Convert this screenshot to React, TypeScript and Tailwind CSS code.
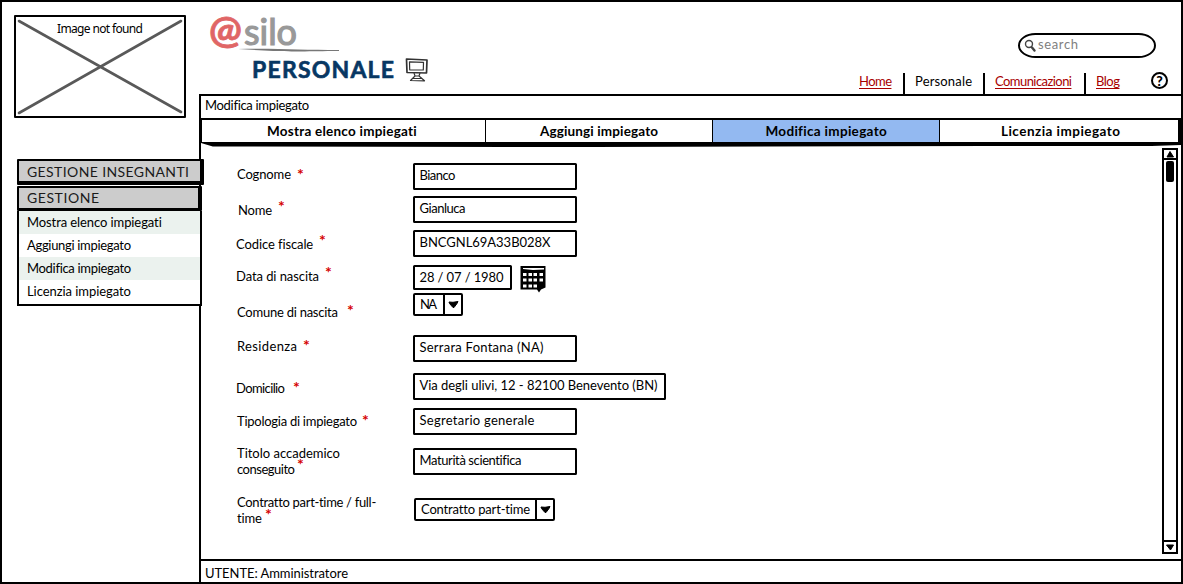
import { useLayoutEffect, useRef, useState, type ReactNode } from "react";

/* Text tracked so that its glyphs span a given width. */
function Fit({ w, className = "", children }: { w: number; className?: string; children: string }) {
  const ref = useRef<HTMLSpanElement>(null);
  const [spacing, setSpacing] = useState<number | null>(null);
  useLayoutEffect(() => {
    if (ref.current && spacing === null) {
      const natural = ref.current.getBoundingClientRect().width;
      setSpacing((w - natural) / Math.max(1, children.length - 1));
    }
  }, [w, children, spacing]);
  return (
    <span
      ref={ref}
      className={`inline-block shrink-0 whitespace-pre ${className}`}
      style={spacing === null ? undefined : { letterSpacing: spacing, width: w }}
    >
      {children}
    </span>
  );
}

function Placeholder() {
  return (
    <div className="relative ml-[12px] mt-[13px] h-[103px] w-[172px] rounded-[1px] border-[2.5px] border-black">
      <svg className="absolute inset-0 h-full w-full" viewBox="0 0 168 99" preserveAspectRatio="none">
        <path d="M3 4 L165 95 M165 4 L3 96" stroke="#595959" strokeWidth="2.6" strokeLinecap="round" />
      </svg>
      <div className="relative flex justify-center pt-[4px] font-['Noto_Sans',sans-serif] text-[12px] leading-[16px]">
        <Fit w={86}>Image not found</Fit>
      </div>
    </div>
  );
}

const menu = [
  { text: "Mostra elenco impiegati", w: 135 },
  { text: "Aggiungi impiegato", w: 104 },
  { text: "Modifica impiegato", w: 104 },
  { text: "Licenzia impiegato", w: 104 },
];

function Sidebar() {
  return (
    <aside className="relative z-10 flex w-[197px] shrink-0 flex-col">
      <Placeholder />
      <div className="ml-[15px] mt-[41px] h-[26px] w-[187px] rounded-[1px] border-t-[2px] border-l-[2px] border-b-[4px] border-r-[4px] border-black bg-[#cccccc] pl-[8px] text-[14px] leading-[21px] text-[#1a1a1a]">
        <Fit w={162}>GESTIONE INSEGNANTI</Fit>
      </div>
      <div className="ml-[15px] mt-px h-[25px] w-[185px] rounded-[1px] border-[2px] border-b-[3px] border-r-[4px] border-black bg-[#cccccc] pl-[8px] text-[14px] leading-[19px] text-[#1a1a1a]">
        <Fit w={72}>GESTIONE</Fit>
      </div>
      <ul className="ml-[15px] w-[185px] border-2 border-t-0 border-black bg-white">
        {menu.map((m) => (
          <li key={m.text} className="h-[23px] pl-[8px] leading-[23px] odd:bg-[#ebf2ee] last:h-[24px]">
            <Fit w={m.w}>{m.text}</Fit>
          </li>
        ))}
      </ul>
    </aside>
  );
}

function Monitor() {
  return (
    <svg className="ml-[11px] mt-px" width="24" height="25" viewBox="0 0 24 25" fill="none" stroke="#333" strokeLinejoin="round">
      <path d="M1.5 1 L22 2 L21.5 15 L2 14.5 Z" strokeWidth="1.7" />
      <path d="M4.5 3.8 L18.5 4.3 L18.3 12 L4.7 11.8 Z" strokeWidth="1.2" />
      <path d="M9 15 L10 18 L14 18 L15 15 M10 18 L5.5 22.5 L19.5 22.8 L14 18 M8 20.5 L16 20.5" strokeWidth="1.2" />
    </svg>
  );
}

function Header() {
  return (
    <header className="flex h-[92px] justify-between">
      <div className="flex flex-col pl-[10px]">
        <div className="flex h-[48px] items-start pt-[5px] leading-[48px]">
          <Fit w={35} className="text-[39px] font-bold leading-[42px] text-[#e06666] [-webkit-text-stroke:0.8px_#e06666]">@</Fit>
          <Fit w={53} className="text-[36px] leading-[48px] text-[#999999] [-webkit-text-stroke:1.2px_#999999]">silo</Fit>
        </div>
        <svg className="-mt-[2px] ml-[29px]" width="102" height="4" viewBox="0 0 102 4">
          <path d="M0 1 C35 0 65 2 101 2 L101 3 C75 3 70 4 35 3 Z" fill="#777" />
        </svg>
        <div className="flex pl-[43px] pt-[5px]">
          <Fit w={142} className="text-[23px] font-bold leading-[24px] text-[#073763] [-webkit-text-stroke:0.6px_#073763]">PERSONALE</Fit>
          <Monitor />
        </div>
      </div>
      <div className="flex flex-col items-end">
        <div className="mr-[25px] mt-[31px] flex h-[25px] w-[138px] items-center rounded-[18px/13px] border-2 border-black pl-[4px] text-[#808080]">
          <svg width="14" height="14" viewBox="0 0 14 14" fill="none" stroke="#444" strokeLinecap="round">
            <circle cx="5" cy="5" r="3.5" strokeWidth="1.4" />
            <path d="M8 8.5 L10.5 11.5" strokeWidth="2.4" />
          </svg>
          <Fit w={40} className="-mt-[2px]">search</Fit>
        </div>
        <nav className="mr-[13px] mt-[15px] flex h-[21px] leading-[16px] [&>a]:text-[#a80000] [&>a>span]:underline [&>a>span]:underline-offset-2">
          <a className="pr-[11px]"><Fit w={33}>Home</Fit></a>
          <span className="border-l-2 border-black pl-[10px] pr-[11px]"><Fit w={57}>Personale</Fit></span>
          <i className="w-[2px] bg-black" />
          <a className="pl-[10px] pr-[12px]"><Fit w={77}>Comunicazioni</Fit></a>
          <i className="w-[2px] bg-black" />
          <a className="pl-[10px] pr-[31px]"><Fit w={24}>Blog</Fit></a>
          <span className="-mt-px flex h-[17px] w-[17px] items-center justify-center rounded-full border-2 border-black text-[14px] font-black leading-[13px]">?</span>
        </nav>
      </div>
    </header>
  );
}

function Tabs() {
  return (
    <div className="flex h-[27px] border-b-[5px] border-black font-bold leading-[22px] text-[13.5px] [clip-path:polygon(0_0,100%_0,100%_25px,97%_26px,80%_26px,40%_27px,1.2%_26.5px,0_23px)]">
      <div className="flex w-[285px] justify-center border-l-[1.5px] border-r-[1.5px] border-black pr-[3px]"><Fit w={150}>Mostra elenco impiegati</Fit></div>
      <div className="flex w-[227px] justify-center border-r-[1.5px] border-black"><Fit w={118}>Aggiungi impiegato</Fit></div>
      <div className="flex w-[227px] justify-center border-r-[1.5px] border-black bg-[#93b9f1]"><Fit w={121}>Modifica impiegato</Fit></div>
      <div className="flex w-[241px] justify-center border-r-[3px] border-black pl-[3px]"><Fit w={119}>Licenzia impiegato</Fit></div>
    </div>
  );
}

function Row({ rowClass, labelClass, children, field }: { rowClass: string; labelClass: string; children: ReactNode; field: ReactNode }) {
  return (
    <div className={`flex items-start ${rowClass}`}>
      <div className={`w-[177px] shrink-0 leading-[16px] ${labelClass}`}>{children}</div>
      {field}
    </div>
  );
}

function Star({ className }: { className: string }) {
  return <span className={`h-[12px] shrink-0 text-[16px] font-bold leading-[16px] text-[#d50000] ${className}`}>*</span>;
}

function Label({ text, w, star }: { text: string; w: number; star: string }) {
  return (
    <div className="flex h-[16px] items-start">
      <Fit w={w}>{text}</Fit>
      <Star className={star} />
    </div>
  );
}

function Input({ text, w, boxClass = "h-[27px] w-[164px]" }: { text: string; w: number; boxClass?: string }) {
  return (
    <div className={`rounded-[1.5px] border-2 border-black bg-white pl-[4.5px] leading-[21px] ${boxClass}`}>
      <Fit w={w}>{text}</Fit>
    </div>
  );
}

function Select({ text, w, boxClass }: { text: string; w: number; boxClass: string }) {
  return (
    <div className={`flex h-[23px] items-stretch justify-between rounded-[2px] border-2 border-black pl-[5px] leading-[18px] ${boxClass}`}>
      <Fit w={w}>{text}</Fit>
      <div className="flex w-[18px] items-center justify-center border-l-2 border-black">
        <svg width="11" height="9" viewBox="0 0 11 9">
          <path d="M1 2 L5 2.3 L10 1.5 L9 3.5 L6 7.5 L5 7.5 L1.5 3.5 Z" stroke="#000" strokeLinejoin="round" />
        </svg>
      </div>
    </div>
  );
}

function Calendar() {
  return (
    <svg className="ml-[8px] mt-px" width="27" height="28" viewBox="0 0 27 28">
      <path d="M0.5 0 H25.5 V21.5 L21 23.5 L19 26.5 L17 23.5 H0.5 Z" />
      <path d="M3 2 H24 V3.5 L13 4 L3 3 Z" fill="#fff" />
      <g fill="#fff">
        {[3, 8.5, 13.5, 19.5].map((x) => (
          <g key={x}>
            <rect x={x} y="7" width="3.5" height="3" />
            <rect x={x} y="12.5" width="3.5" height="3" />
            {x < 15 && <rect x={x} y="18.5" width="3.5" height="3" />}
          </g>
        ))}
      </g>
    </svg>
  );
}

function Form() {
  return (
    <div className="flex flex-col pl-[35px] pt-[16px]">
      <Row rowClass="h-[33px]" labelClass="pt-[3px] pl-px" field={<Input text="Bianco" w={36} />}>
        <Label w={54} text="Cognome" star="ml-[6px]" />
      </Row>
      <Row rowClass="h-[34px]" labelClass="pt-[6px] pl-[2px]" field={<Input text="Gianluca" w={46} />}>
        <Label w={34} text="Nome" star="-mt-[4px] ml-[6px]" />
      </Row>
      <Row rowClass="h-[35px]" labelClass="pt-[6px]" field={<Input text="BNCGNL69A33B028X" w={131} />}>
        <Label w={77} text="Codice fiscale" star="-mt-[4px] ml-[6px]" />
      </Row>
      <Row
        rowClass="h-[28px]"
        labelClass="pt-[3px]"
        field={<><Input text="28 / 07 / 1980" w={84} boxClass="h-[25px] w-[99px]" /><Calendar /></>}
      >
        <Label w={83} text="Data di nascita" star="-mt-[4px] ml-[6px]" />
      </Row>
      <Row rowClass="h-[42px]" labelClass="pt-[11px] pl-px" field={<Select text="NA" w={17} boxClass="w-[50px]" />}>
        <Label w={101} text="Comune di nascita" star="-mt-[2px] ml-[9px]" />
      </Row>
      <Row rowClass="h-[38px]" labelClass="pt-[3px] pl-px" field={<Input text="Serrara Fontana (NA)" w={124} />}>
        <Label w={60} text="Residenza" star="-mt-px ml-[6px]" />
      </Row>
      <Row rowClass="h-[35px]" labelClass="pt-[7px]" field={<Input text="Via degli ulivi, 12 - 82100 Benevento (BN)" w={238} boxClass="h-[27px] w-[253px]" />}>
        <Label w={49} text="Domicilio" star="-mt-px ml-[8px]" />
      </Row>
      <Row rowClass="h-[40px]" labelClass="pt-[5px] pl-px" field={<Input text="Segretario generale" w={115} />}>
        <Label w={120} text="Tipologia di impiegato" star="-mt-px ml-[5px]" />
      </Row>
      <Row rowClass="h-[51px]" labelClass="-mt-[3px] pl-px" field={<Input text="Maturità scientifica" w={102} />}>
        <div className="flex h-[16px]"><Fit w={103}>Titolo accademico</Fit></div>
        <Label w={58} text="conseguito" star="-mt-[5px] ml-[2px]" />
      </Row>
      <Row rowClass="h-[33px]" labelClass="-mt-[5px] pl-px" field={<Select text="Contratto part-time" w={109} boxClass="ml-px -mt-px w-[141px]" />}>
        <div className="flex h-[16px]"><Fit w={139}>Contratto part-time / full-</Fit></div>
        <Label w={25} text="time" star="-mt-[4px] ml-[3px]" />
      </Row>
    </div>
  );
}

function Scrollbar() {
  return (
    <div className="mr-[3px] mt-px flex h-[406px] w-[16px] flex-col items-center border-2 border-black">
      <div className="flex h-[10px] w-full justify-center border-b-2 border-black">
        <svg width="8" height="8" viewBox="0 0 8 8"><path d="M1 7 L4 1.5 L7.5 7 Z" stroke="#000" /></svg>
      </div>
      <div className="mt-px h-[21px] w-[8px] rounded-[2px] bg-black" />
      <div className="mt-auto flex h-[12px] w-full items-center justify-center border-t-2 border-black">
        <svg width="8" height="7" viewBox="0 0 8 7"><path d="M0.5 1 L7.5 1 L4.5 6 Z" stroke="#000" /></svg>
      </div>
    </div>
  );
}

export default function App() {
  return (
    <div className="flex h-[584px] w-[1183px] overflow-hidden border-2 border-black bg-white font-['Lato',sans-serif] text-[13px] text-black">
      <Sidebar />
      <main className="flex min-w-0 flex-1 flex-col">
        <Header />
        <div className="flex flex-1 flex-col border-l-2 border-t-2 border-black">
          <div className="h-[24px] border-b-2 border-black pl-[4px] leading-[19px]">
            <Fit w={104}>Modifica impiegato</Fit>
          </div>
          <Tabs />
          <section className="flex h-[412px] items-start justify-between">
            <Form />
            <Scrollbar />
          </section>
          <footer className="flex-1 border-t-2 border-black pl-[4px] leading-[25px]">
            <Fit w={143}>UTENTE: Amministratore</Fit>
          </footer>
        </div>
      </main>
    </div>
  );
}
